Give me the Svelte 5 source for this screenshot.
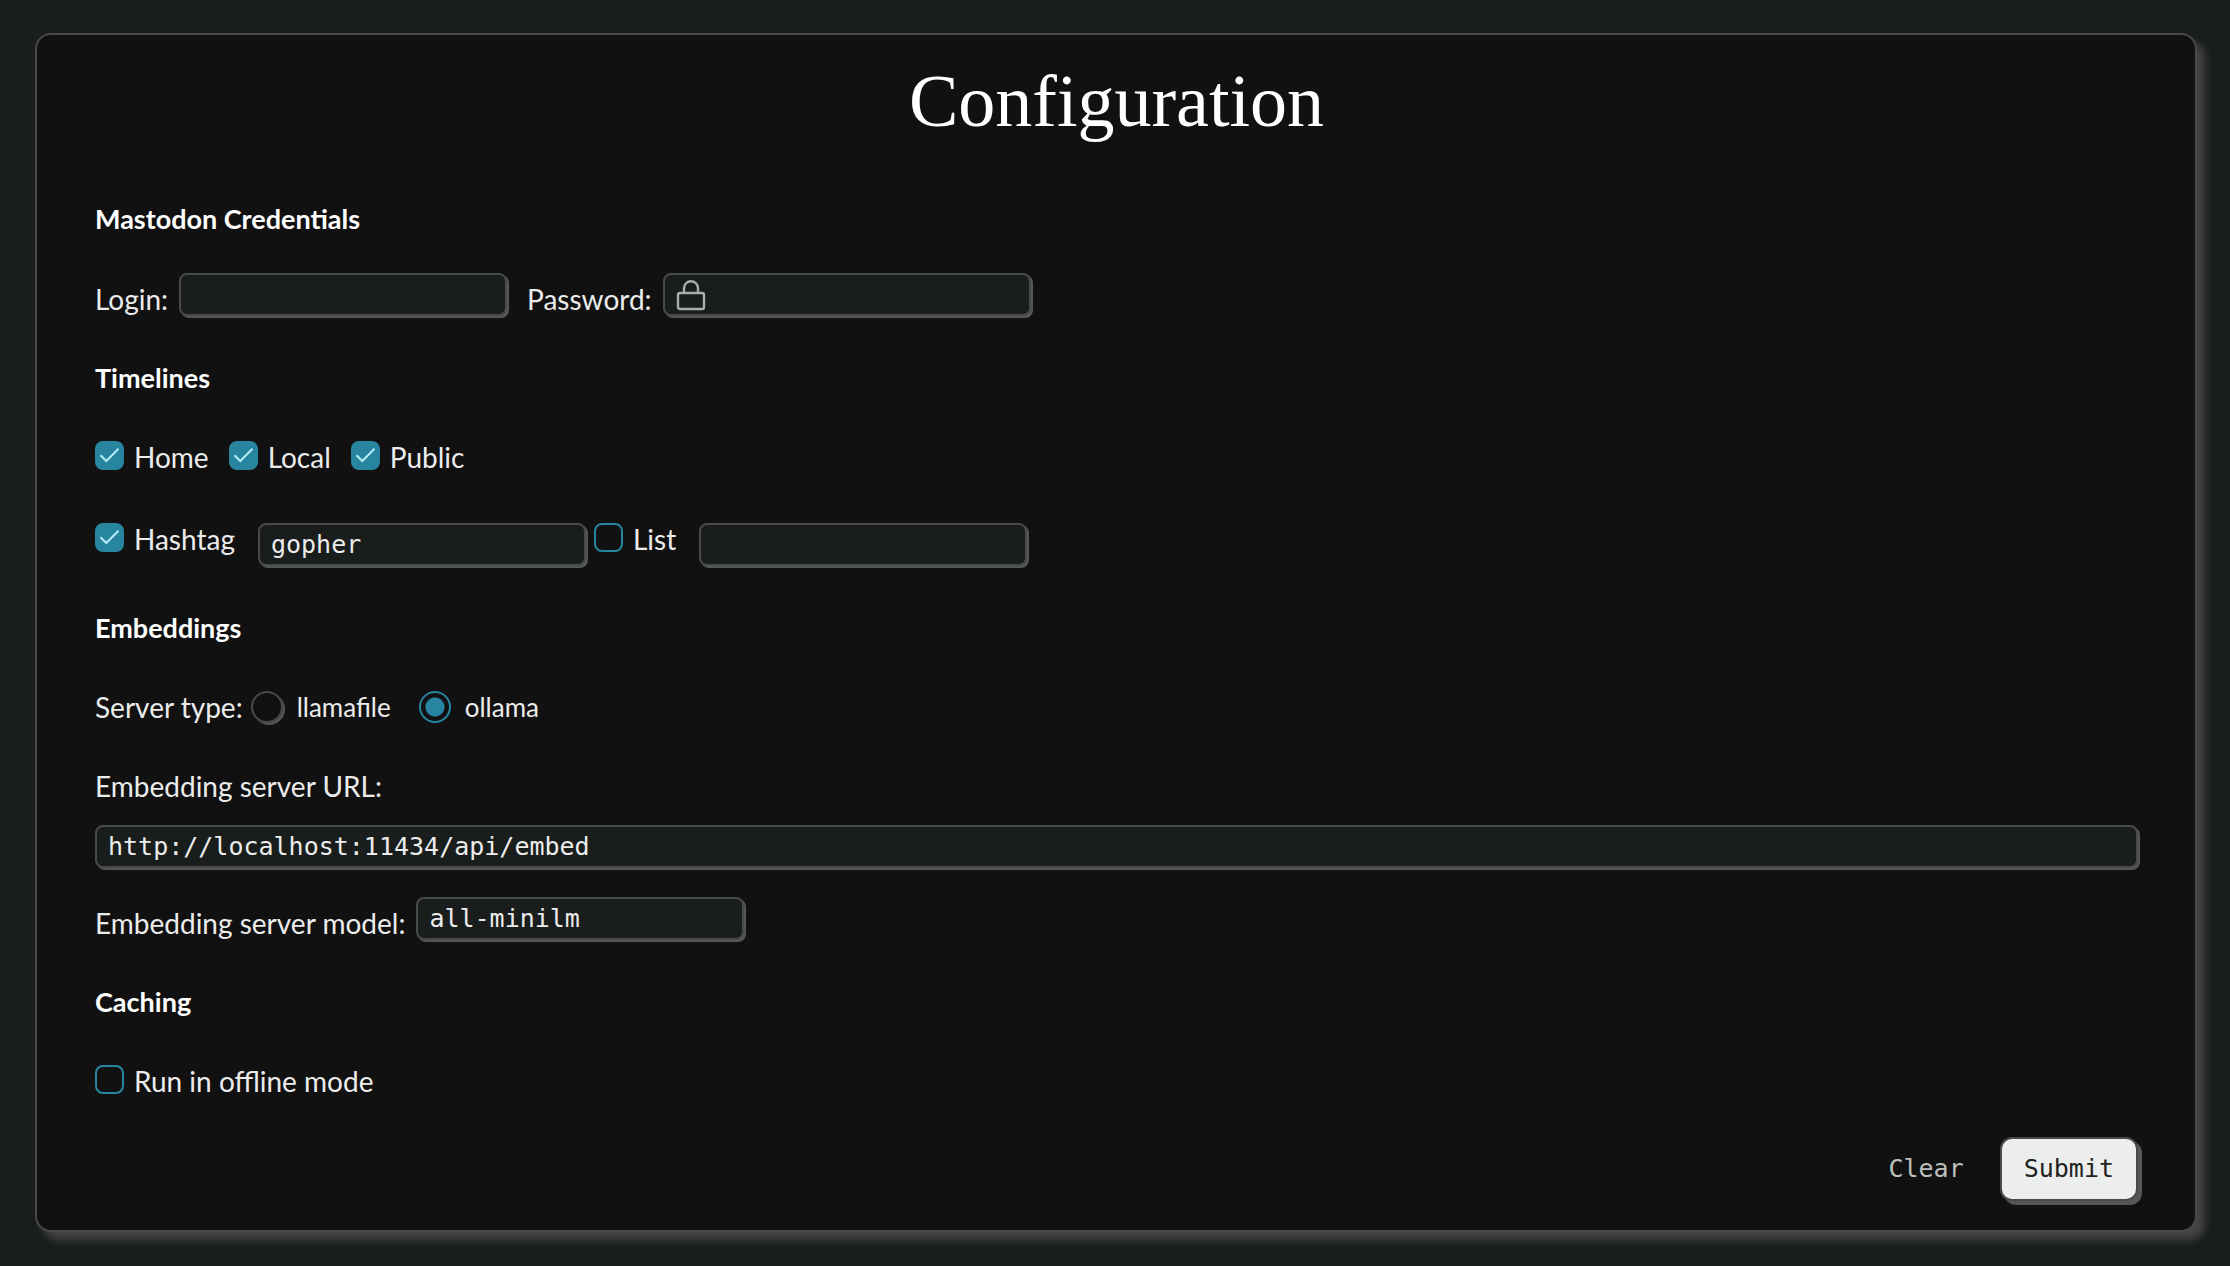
<script>
  let login = $state('');
  let password = $state('');
  let timelines = $state([
    { id: 'home', label: 'Home', on: true },
    { id: 'local', label: 'Local', on: true },
    { id: 'public', label: 'Public', on: true }
  ]);
  let useHashtag = $state(true);
  let hashtag = $state('gopher');
  let useList = $state(false);
  let list = $state('');
  let server = $state('ollama');
  let url = $state('http://localhost:11434/api/embed');
  let model = $state('all-minilm');
  let offline = $state(false);
</script>

{#snippet tick()}
  <svg class="tick" viewBox="0 0 29 29" aria-hidden="true"><path d="M5.5 14.2 11.3 20 23.5 7.8" /></svg>
{/snippet}

<main class="panel">
  <h1>Configuration</h1>
  <form onsubmit={(e) => e.preventDefault()}>
    <section class="compact">
      <h2>Mastodon Credentials</h2>
      <div class="row">
        <div class="field">
          <label for="login">Login:</label>
          <input id="login" class="text" type="text" bind:value={login} />
        </div>
        <div class="field">
          <label for="password">Password:</label>
          <span class="secret">
            <input id="password" class="text" type="password" bind:value={password} />
            <svg class="lock" viewBox="0 0 32 32" aria-hidden="true">
              <rect x="3" y="13" width="26" height="16" rx="2" />
              <path d="M9 13V8.2a7 7 0 0 1 14 0V13" />
            </svg>
          </span>
        </div>
      </div>
    </section>

    <section>
      <h2>Timelines</h2>
      <div class="row">
        {#each timelines as t (t.id)}
          <label class="choice">
            <span class="box"><input type="checkbox" bind:checked={t.on} />{@render tick()}</span>
            {t.label}
          </label>
        {/each}
      </div>
      <div class="row pairs">
        <div class="pair">
          <label class="choice">
            <span class="box"><input type="checkbox" bind:checked={useHashtag} />{@render tick()}</span>
            Hashtag
          </label>
          <input class="text" type="text" aria-label="Hashtag name" bind:value={hashtag} />
        </div>
        <div class="pair">
          <label class="choice">
            <span class="box"><input type="checkbox" bind:checked={useList} />{@render tick()}</span>
            List
          </label>
          <input class="text" type="text" aria-label="List name" bind:value={list} />
        </div>
      </div>
    </section>

    <section>
      <h2>Embeddings</h2>
      <div class="row servers" role="radiogroup" aria-labelledby="server-type">
        <span id="server-type">Server type:</span>
        <label class="option"><input type="radio" name="server" value="llamafile" bind:group={server} />llamafile</label>
        <label class="option"><input type="radio" name="server" value="ollama" bind:group={server} />ollama</label>
      </div>
      <div class="stack">
        <label for="url">Embedding server URL:</label>
        <input id="url" class="text wide" type="text" bind:value={url} />
      </div>
      <div class="field">
        <label for="model">Embedding server model:</label>
        <input id="model" class="text" type="text" bind:value={model} />
      </div>
    </section>

    <section>
      <h2>Caching</h2>
      <div class="row">
        <label class="choice">
          <span class="box"><input type="checkbox" bind:checked={offline} />{@render tick()}</span>
          Run in offline mode
        </label>
      </div>
    </section>

    <div class="actions">
      <button type="reset" class="clear">Clear</button>
      <button type="submit" class="submit">Submit</button>
    </div>
  </form>
</main>

<style>
  :global(body) {
    background: #191d1b;
  }
  .panel {
    box-sizing: border-box;
    margin: 33px 33px 34px 35px;
    padding: 22px 57px 29px 58px;
    border: 2px solid #484a49;
    border-radius: 16px;
    background: #111;
    box-shadow: 8px 8px 8px #444645;
    color: #ececec;
    font: 28px/32px Lato, 'Noto Sans', sans-serif;
  }
  h1 {
    margin: 0 0 58px;
    color: #fff;
    font: 400 74px/88px 'Liberation Serif', serif;
    text-align: center;
  }
  form {
    display: flex;
    flex-direction: column;
    gap: 46px;
  }
  section {
    display: flex;
    flex-direction: column;
  }
  h2 {
    margin: 0 0 47px;
    color: #fff;
    font-size: 27px;
    font-weight: 700;
    line-height: 32px;
  }
  .compact h2 {
    margin-bottom: 38px;
  }
  .row,
  .pair {
    display: flex;
    align-items: flex-start;
    flex-wrap: wrap;
    gap: 20px;
  }
  .pair {
    gap: 23px;
  }
  .field {
    display: flex;
    align-items: flex-end;
    gap: 11px;
  }
  .field label {
    padding-bottom: 1px;
  }
  .pairs {
    gap: 8px;
    margin-top: 50px;
  }
  .text {
    box-sizing: border-box;
    width: 328px;
    max-width: 100%;
    height: 43px;
    margin: 0;
    padding: 0 11px;
    border: 2px solid #484a49;
    border-radius: 8px;
    background: #191d1b;
    box-shadow: 2px 2px 0 #555756;
    color: #ececec;
    font: 25px/32px 'DejaVu Sans Mono', monospace;
  }
  .wide {
    width: 100%;
  }
  .secret {
    position: relative;
    display: flex;
  }
  .secret .text {
    width: 368px;
    padding-left: 52px;
  }
  .lock {
    position: absolute;
    left: 12px;
    top: 7px;
    width: 32px;
    height: 32px;
    fill: none;
    stroke: #a5afad;
    stroke-width: 2.4;
  }
  .choice {
    display: flex;
    align-items: flex-start;
    gap: 10px;
  }
  .box {
    display: grid;
    width: 29px;
    height: 29px;
  }
  .box input,
  .tick {
    grid-area: 1 / 1;
    width: 29px;
    height: 29px;
    margin: 0;
  }
  .box input {
    appearance: none;
    border: 2px solid #28859f;
    border-radius: 8px;
  }
  .box input:checked {
    background: #28859f;
  }
  .tick {
    visibility: hidden;
    pointer-events: none;
    fill: none;
    stroke: #b4ecfa;
    stroke-width: 2;
  }
  .box input:checked + .tick {
    visibility: visible;
  }
  .servers {
    align-items: center;
    gap: 8px;
  }
  .option {
    display: flex;
    align-items: center;
    gap: 14px;
    margin-right: 20px;
    font-size: 26px;
  }
  .option input {
    appearance: none;
    box-sizing: border-box;
    width: 32px;
    height: 32px;
    margin: 0;
    border: 2px solid #484a49;
    border-radius: 50%;
    box-shadow: 2px 2px 0 #555756;
  }
  .option input:checked {
    border-color: #28859f;
    background: radial-gradient(circle, #28859f 9px, transparent 10px);
    box-shadow: none;
  }
  .stack {
    display: flex;
    flex-direction: column;
    gap: 23px;
    margin: 47px 0 29px;
  }
  .actions {
    display: flex;
    justify-content: flex-end;
    gap: 12px;
    margin-top: -6px;
  }
  button {
    height: 64px;
    padding: 0 22px;
    border: 2px solid transparent;
    border-radius: 12px;
    font: 25px/32px 'DejaVu Sans Mono', monospace;
    cursor: pointer;
  }
  .clear {
    background: none;
    color: #bcc0be;
  }
  .submit {
    border-color: #484a49;
    background: #eceeed;
    box-shadow: 4px 4px 0 #555756;
    color: #222;
  }
</style>
